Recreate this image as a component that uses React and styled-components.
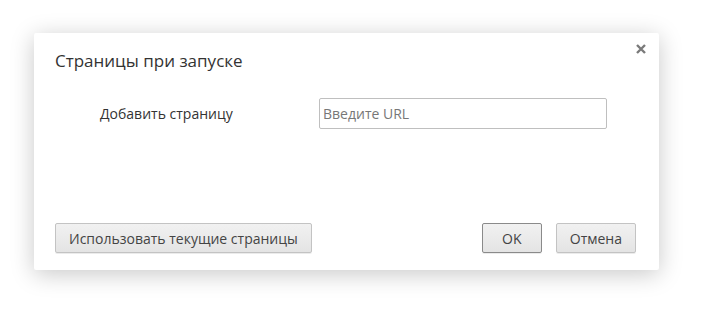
import styled, { createGlobalStyle } from "styled-components";

const GlobalStyle = createGlobalStyle`
  html, body {
    margin: 0;
    background: #fff;
    font-family: "Open Sans", "Noto Sans", sans-serif;
  }
`;

function App() {
  return (
    <Page>
      <GlobalStyle />
      <Dialog>
        <Header>
          <Title>Страницы при запуске</Title>
          <CloseButton aria-label="Закрыть">
            <svg width="10" height="10" viewBox="0 0 10 10">
              <path d="M1 1 L9 9 M9 1 L1 9" stroke="#7a7a7a" strokeWidth="2.4" />
            </svg>
          </CloseButton>
        </Header>
        <Row>
          <Label>Добавить страницу</Label>
          <UrlInput placeholder="Введите URL" />
        </Row>
        <Footer>
          <Button>Использовать текущие страницы</Button>
          <Actions>
            <Button $focused>OK</Button>
            <Button>Отмена</Button>
          </Actions>
        </Footer>
      </Dialog>
    </Page>
  );
}

const Page = styled.div`
  padding: 33px 0 0 34px;
  height: 311px;
  box-sizing: border-box;
`;

const Dialog = styled.div`
  width: 625px;
  height: 237px;
  box-sizing: border-box;
  background: #fff;
  border-radius: 2px;
  box-shadow: 0 4px 23px rgba(0, 0, 0, 0.22);
  display: flex;
  flex-direction: column;
  padding: 0 21px 17px 21px;
`;

const Header = styled.div`
  display: flex;
  justify-content: space-between;
  align-items: flex-start;
  height: 58px;
`;

const Title = styled.h1`
  margin: 16px 0 0 0;
  font-size: 17px;
  font-weight: 400;
  color: #333;
`;

const CloseButton = styled.button`
  border: none;
  background: none;
  padding: 0;
  margin: 11px -8px 0 0;
  width: 10px;
  height: 10px;
  display: flex;
`;

const Row = styled.div`
  display: flex;
  align-items: center;
  padding-top: 7px;
`;

const Label = styled.span`
  width: 264px;
  padding-left: 45px;
  box-sizing: border-box;
  font-size: 14px;
  color: #333;
`;

const UrlInput = styled.input`
  width: 288px;
  height: 31px;
  box-sizing: border-box;
  border: 1px solid #bfbfbf;
  border-radius: 2px;
  padding: 0 3px;
  font-family: inherit;
  font-size: 14px;
  color: #333;
  &::placeholder {
    color: #777;
  }
`;

const Footer = styled.div`
  margin-top: auto;
  display: flex;
  justify-content: space-between;
  align-items: center;
`;

const Actions = styled.div`
  display: flex;
  gap: 14px;
  margin-right: 2px;
`;

const Button = styled.button`
  height: 30px;
  padding: 0 13px;
  min-width: 60px;
  box-sizing: border-box;
  border: 1px solid ${(p) => (p.$focused ? "#8a8a8a" : "#c3c3c3")};
  border-radius: 2px;
  background: linear-gradient(#f1f1f1, #e4e4e4);
  box-shadow: 0 1px 0 rgba(0, 0, 0, 0.08);
  font-family: inherit;
  font-size: 14px;
  color: #444;
  &:first-child {
    margin-left: 0;
  }
`;

export default App;
